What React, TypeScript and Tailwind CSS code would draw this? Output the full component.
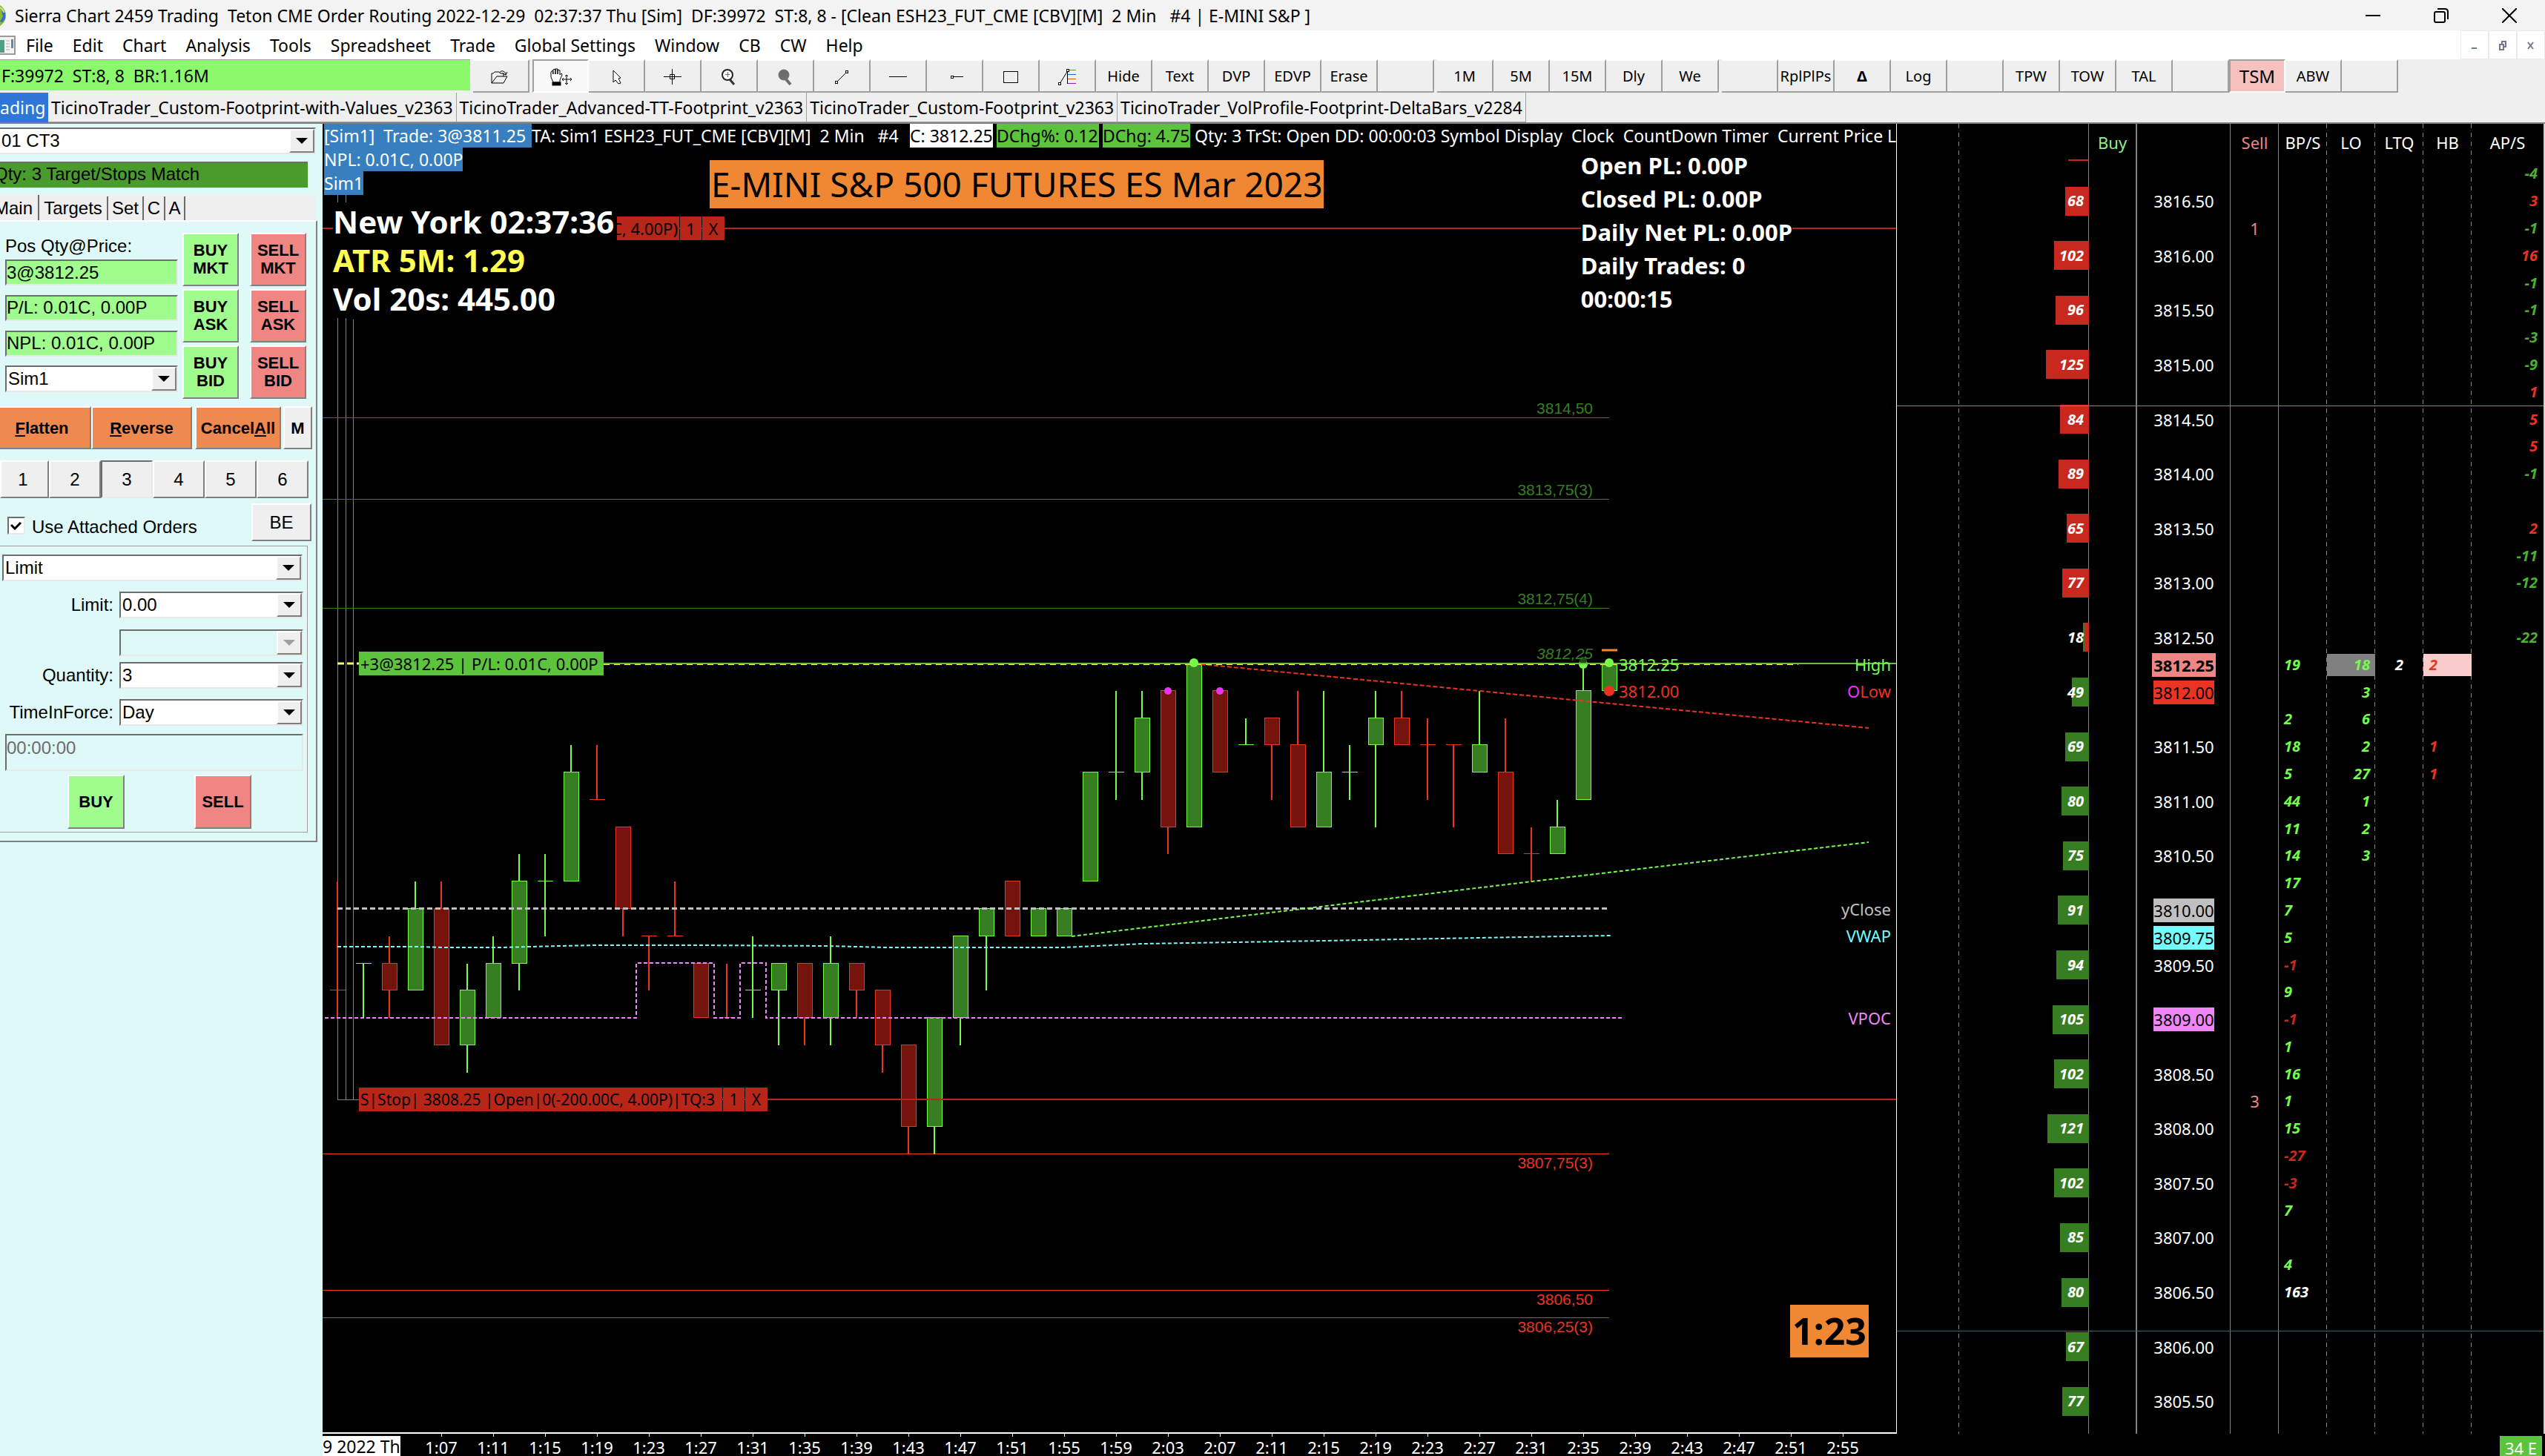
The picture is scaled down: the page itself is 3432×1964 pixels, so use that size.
import { useState } from "react";
import type { ReactNode } from "react";
import clsx from "clsx";

const RAISED =
  "border-2 border-t-white border-l-white border-r-[#808080] border-b-[#808080]";
const SUNKEN =
  "border-2 border-t-[#6d6d6d] border-l-[#6d6d6d] border-r-[#e9e9e9] border-b-[#e9e9e9]";

/* ---------- window chrome ---------- */

function TitleBar() {
  return (
    <header className="flex h-[41px] shrink-0 items-center justify-between bg-[#f3f3f3] pr-[2px]">
      <div className="flex items-center gap-3">
        <svg width="8" height="32" viewBox="0 0 8 32">
          <circle cx="-8" cy="16" r="16" fill="#8cb83a" />
          <path d="M2 10 L7 12 L7 20 L3 25 L0 24 L4 17 Z" fill="#2f6fd0" />
          <path d="M0 5 Q5 8 5 12" stroke="#c9e28a" strokeWidth="2" fill="none" />
        </svg>
        <h1 className="whitespace-pre text-[23px] leading-7">
          {"Sierra Chart 2459 Trading  Teton CME Order Routing 2022-12-29  02:37:37 Thu [Sim]  DF:39972  ST:8, 8 - [Clean ESH23_FUT_CME [CBV][M]  2 Min   #4 | E-MINI S&P ]"}
        </h1>
      </div>
      <div className="flex">
        <button aria-label="Minimize" className="flex h-9 w-[92px] items-center justify-center">
          <svg width="20" height="20"><path d="M0 10H20" stroke="#000" strokeWidth="2" /></svg>
        </button>
        <button aria-label="Restore" className="flex h-9 w-[92px] items-center justify-center">
          <svg width="20" height="20" fill="none" stroke="#000" strokeWidth="2">
            <rect x="1" y="5" width="14" height="14" rx="2" />
            <path d="M5 1H15Q19 1 19 5V15" />
          </svg>
        </button>
        <button aria-label="Close" className="flex h-9 w-[92px] items-center justify-center">
          <svg width="20" height="20" stroke="#000" strokeWidth="2"><path d="M0 0L20 20M20 0L0 20" /></svg>
        </button>
      </div>
    </header>
  );
}

const MENU = ["File", "Edit", "Chart", "Analysis", "Tools", "Spreadsheet", "Trade", "Global Settings", "Window", "CB", "CW", "Help"];

function MenuBar() {
  return (
    <nav className="flex h-[39px] shrink-0 items-center bg-white">
      <svg width="22" height="26" viewBox="0 0 22 26">
        <rect x="-4" y="1" width="24" height="24" fill="#f4f4f4" stroke="#9a9a9a" strokeWidth="2" />
        <rect x="0" y="6" width="6" height="17" fill="#4f9f8a" />
        <path d="M8 7H13M8 11H13M8 15H13M8 19H13" stroke="#b0b0b0" />
        <rect x="15" y="5" width="3" height="12" fill="#5b8fa8" />
      </svg>
      {MENU.map((item) => (
        <button key={item} className="px-[13px] text-[23px] leading-7">
          {item}
        </button>
      ))}
      <div className="ml-auto flex h-full">
        {[
          { label: "Minimize chart", d: "M4 12H11" },
          { label: "Restore chart", d: "M4 7H9V14H4ZM7 7V3H12V10H9" },
          { label: "Close chart", d: "M4 4L11 13M11 4L4 13" },
        ].map((b) => (
          <button key={b.label} aria-label={b.label} className="flex w-[38px] items-center justify-center border border-[#ebebeb]">
            <svg width="16" height="16"><path d={b.d} fill="none" stroke="#6d7b8c" strokeWidth="2" /></svg>
          </button>
        ))}
      </div>
    </nav>
  );
}

const ICONS: Record<string, ReactNode> = {
  open: (
    <g fill="none" stroke="#000">
      <path d="M26 31V18H28L30 16H36L38 18H42V22M26 31L33 22H47L42 31H26" />
      <path d="M36 17Q41 12 45 18V20M41 18L45 20L47 16" />
    </g>
  ),
  hand: (
    <g stroke="#000">
      <path d="M28 30L25 23V16L27 14L28 19V13L31 12V19V12L34 12V19V13L37 14V20L39 18L40 20L37 27V30Z" fill="#fff" />
      <rect x="27" y="30" width="11" height="4" fill="#000" />
      <path d="M46 20V33M40 26H53M44 22L46 20L48 22M44 31L46 33L48 31M42 24L40 26L42 28M51 24L53 26L51 28" fill="none" />
    </g>
  ),
  cursor: <path d="M34 14V30L37 27L41 32L44 31L41 25L44 24Z" fill="#fff" stroke="#000" />,
  cross: <path d="M26 22.5H50M37.5 12V33M34.5 19.5H40.5V25.5H34.5Z" fill="none" stroke="#000" />,
  zoom: (
    <g>
      <circle cx="36" cy="20" r="7" fill="#fff" stroke="#222" strokeWidth="2" />
      <path d="M33 19.5H39M36.5 16V23" stroke="#2f9a2f" />
      <path d="M39 26L45 33" stroke="#333" strokeWidth="3" />
    </g>
  ),
  zoomOff: (
    <g fill="#6d6d6d" stroke="#6d6d6d">
      <circle cx="36" cy="20" r="7" />
      <path d="M39 26L45 33" strokeWidth="4" />
    </g>
  ),
  line: (
    <g fill="#fff" stroke="#000">
      <path d="M31 30L45 16" />
      <rect x="29.5" y="28.5" width="3" height="3" />
      <rect x="43.5" y="14.5" width="3" height="3" />
    </g>
  ),
  hline: <path d="M26 22.5H50" stroke="#000" />,
  ray: (
    <g fill="#fff" stroke="#000">
      <path d="M35 22.5H50" />
      <rect x="33.5" y="21.5" width="3" height="3" />
    </g>
  ),
  rect: <rect x="28.5" y="15.5" width="19" height="15" fill="none" stroke="#000" />,
  fib: (
    <g fill="#fff" stroke="#000">
      <path d="M28 32L38.5 15V32" fill="none" />
      <path d="M40 13.5H50" stroke="#4f9f2f" />
      <path d="M39 19.5H50" stroke="#2f5fd0" />
      <path d="M39 25.5H50" stroke="#e0561f" />
      <path d="M39 31.5H50" stroke="#9020b0" />
      <rect x="26.5" y="30.5" width="3" height="3" />
      <rect x="37.5" y="12.5" width="3" height="3" />
    </g>
  ),
};

const TOOL_GROUPS: string[][] = [
  ["open"],
  ["hand", "cursor", "cross", "zoom", "zoomOff", "line", "hline", "ray", "rect", "fib", "Hide", "Text", "DVP", "EDVP", "Erase", ""],
  ["1M", "5M", "15M", "Dly", "We"],
  ["", "RplPlPs", "Δ", "Log", "", "TPW", "TOW", "TAL", "", "TSM", "ABW", ""],
];

function ToolButton({ id }: { id: string }) {
  const pressed = id === "hand" || id === "TSM";
  return (
    <button
      aria-label={id || "Empty"}
      aria-pressed={pressed}
      className={clsx(
        "flex h-full w-[76px] items-center justify-center overflow-hidden border-2 text-[20px] leading-6",
        pressed
          ? "border-t-[#a0a0a0] border-l-[#a0a0a0] border-r-white border-b-white"
          : "border-l-0 border-t-white border-r-[#a0a0a0] border-b-[#a0a0a0] bg-[#efefef]",
        id === "hand" && "bg-[#f8f8f8]",
        id === "TSM" && "bg-[#f6c1bf] text-[24px]",
        id === "Δ" && "font-bold"
      )}
    >
      {ICONS[id] ? (
        <svg width="76" height="44" viewBox="0 0 76 44" className="shrink-0">
          {ICONS[id]}
        </svg>
      ) : (
        id
      )}
    </button>
  );
}

function Toolbar() {
  return (
    <div className="flex h-[45px] shrink-0 gap-1 bg-[#efefef]">
      <div className="h-[42px] w-[634px] border-t border-[#a0a0a0] bg-[#8afa6c] px-[2px] text-[23px] leading-[42px] whitespace-pre">
        {"F:39972  ST:8, 8  BR:1.16M"}
      </div>
      {TOOL_GROUPS.map((group, g) => (
        <div key={g} className="flex">
          {group.map((id, i) => (
            <ToolButton key={i} id={id} />
          ))}
        </div>
      ))}
    </div>
  );
}

const CHARTBOOKS = [
  "TicinoTrader_Custom-Footprint-with-Values_v2363",
  "TicinoTrader_Advanced-TT-Footprint_v2363",
  "TicinoTrader_Custom-Footprint_v2363",
  "TicinoTrader_VolProfile-Footprint-DeltaBars_v2284",
];

function BookTabs() {
  return (
    <div className="flex h-[42px] shrink-0 border-b-2 border-[#808080] bg-[#efefef] text-[23px] leading-[40px]">
      <button className="w-[65px] bg-[#2f76d6] pr-[5px] text-right text-white">ading</button>
      {CHARTBOOKS.map((name) => (
        <button key={name} className="border-r border-b border-[#a0a0a0] px-1 whitespace-nowrap">
          {name}
        </button>
      ))}
    </div>
  );
}

/* ---------- trade window ---------- */

function Combo({ label, options, className, disabled }: { label: string; options: string[]; className?: string; disabled?: boolean }) {
  return (
    <div className={clsx("flex h-9", SUNKEN, disabled ? "bg-[#dff9f9]" : "bg-white", className)}>
      <select aria-label={label} disabled={disabled} className="min-w-0 flex-1 appearance-none bg-transparent px-[2px] leading-7 outline-none">
        {options.map((o) => (
          <option key={o}>{o}</option>
        ))}
      </select>
      <span className={clsx("pointer-events-none flex w-[34px] items-center justify-center bg-[#efefef]", RAISED)}>
        <svg width="16" height="8"><path d="M0 0H16L8 8Z" fill={disabled ? "#a0a0a0" : "#000"} /></svg>
      </span>
    </div>
  );
}

function Push({ children, className }: { children: ReactNode; className?: string }) {
  return <button className={clsx("flex items-center justify-center text-center", RAISED, className)}>{children}</button>;
}

const GREEN = "bg-[#a0fc8c] text-[22px] font-bold leading-6";
const PINK = "bg-[#ef8683] text-[22px] font-bold leading-6";
const ORANGE = "bg-[#ee8950] text-[22px] font-bold";

function Readout({ label, value }: { label: string; value: string }) {
  return <input aria-label={label} readOnly defaultValue={value} className={clsx("h-[35px] w-full bg-[#a0fc8c] outline-none", SUNKEN)} />;
}

function TradeWindow() {
  const [qty, setQty] = useState(3);
  return (
    <aside className="w-[435px] shrink-0 overflow-hidden bg-[#dff9f9] pt-[5px] font-['Liberation_Sans',Arial,sans-serif] text-[24px]">
      <Combo label="Trade window" options={["01 CT3"]} className="w-[426px] border-l-0" />
      <div className="mt-[10px] h-[35px] w-[415px] border-t-2 border-[#6d6d6d] bg-[#499c2c] leading-[30px]">
        <span className="-ml-2">Qty: 3 Target/Stops Match</span>
      </div>
      <div role="tablist" className="mt-[10px] flex h-[34px] w-[426px] items-end bg-[#efefef]">
        <button role="tab" aria-selected className="h-[34px] w-[53px] border-r-2 border-[#6d6d6d] text-left">
          <span className="-ml-2">Main</span>
        </button>
        {[
          ["Targets", "w-[93px]"],
          ["Set", "w-[48px]"],
          ["C", "w-[29px]"],
          ["A", "w-[27px]"],
        ].map(([t, w]) => (
          <button key={t} role="tab" className={clsx("h-[32px] border-r-2 border-[#6d6d6d] leading-8", w)}>
            {t}
          </button>
        ))}
      </div>

      <div className="h-[839px] w-[428px] border-t-2 border-r-2 border-b-2 border-t-white border-r-[#808080] border-b-[#808080] pt-[15px]">
        <div className="flex">
          <div className="ml-[7px] flex w-[233px] flex-col">
            <div className="h-9 leading-9">Pos Qty@Price:</div>
            <Readout label="Position" value="3@3812.25" />
            <div className="mt-3"><Readout label="Profit/Loss" value="P/L: 0.01C, 0.00P" /></div>
            <div className="mt-3"><Readout label="Net profit/loss" value="NPL: 0.01C, 0.00P" /></div>
            <Combo label="Account" options={["Sim1"]} className="mt-3" />
          </div>
          <div className="ml-[6px] grid w-[76px] auto-rows-[72px] gap-1">
            <Push className={GREEN}>BUY<br />MKT</Push>
            <Push className={GREEN}>BUY<br />ASK</Push>
            <Push className={GREEN}>BUY<br />BID</Push>
          </div>
          <div className="ml-[15px] grid w-[76px] auto-rows-[72px] gap-1">
            <Push className={PINK}>SELL<br />MKT</Push>
            <Push className={PINK}>SELL<br />ASK</Push>
            <Push className={PINK}>SELL<br />BID</Push>
          </div>
        </div>

        <div className="mt-[10px] flex h-[58px]">
          <Push className={clsx(ORANGE, "w-[123px] border-l-0 pr-2")}><u>F</u>latten</Push>
          <Push className={clsx(ORANGE, "w-[136px]")}><u>R</u>everse</Push>
          <Push className={clsx(ORANGE, "ml-1 w-[116px]")}>Cancel<u>A</u>ll</Push>
          <Push className="ml-[3px] w-[39px] bg-[#efefef] text-[22px] font-bold">M</Push>
        </div>

        <div className="mt-[15px] flex h-[51px]">
          {[1, 2, 3, 4, 5, 6].map((n) => (
            <button
              key={n}
              onClick={() => setQty(n)}
              className={clsx("bg-[#efefef]", n === 1 ? "w-[66px] pr-1" : "w-[70px]", n === qty ? SUNKEN : RAISED)}
            >
              {n}
            </button>
          ))}
        </div>

        <div className="mt-[7px] flex h-[51px] items-center">
          <input
            id="attached"
            type="checkbox"
            defaultChecked
            className={clsx("peer ml-[10px] mt-2 h-6 w-6 appearance-none bg-white", SUNKEN)}
          />
          <svg width="16" height="12" className="pointer-events-none -ml-5 mt-2 hidden peer-checked:block">
            <path d="M1 5L6 10L14 2" fill="none" stroke="#000" strokeWidth="3" />
          </svg>
          <label htmlFor="attached" className="ml-[13px] mt-3">Use Attached Orders</label>
          <Push className="ml-auto mr-[6px] h-[51px] w-[81px] bg-[#efefef]">BE</Push>
        </div>

        <div className="mt-[6px] h-[387px] w-[415px] border border-l-0 border-[#a0a0a0] pt-[11px]">
          <Combo label="Order type" options={["Limit"]} className="ml-[3px] w-[405px]" />
          <div className="mt-[14px] flex items-center justify-end pr-[5px]">
            <span className="mr-2">Limit:</span>
            <Combo label="Limit" options={["0.00"]} className="w-[248px]" />
          </div>
          <div className="mt-[15px] flex justify-end pr-[5px]">
            <Combo label="Second price" options={[""]} disabled className="w-[248px]" />
          </div>
          <div className="mt-2 flex items-center justify-end pr-[5px]">
            <span className="mr-2">Quantity:</span>
            <Combo label="Quantity" options={["3"]} className="w-[248px]" />
          </div>
          <div className="mt-[14px] flex items-center justify-end pr-[5px]">
            <span className="mr-2">TimeInForce:</span>
            <Combo label="TimeInForce" options={["Day"]} className="w-[248px]" />
          </div>
          <input aria-label="Expiry" disabled defaultValue="00:00:00" className={clsx("mt-[11px] ml-[7px] block h-[50px] w-[402px] pb-3 text-[#6d6d6d]", SUNKEN)} />
          <div className="mt-[5px] flex">
            <Push className={clsx(GREEN, "ml-[91px] h-[73px] w-[77px]")}>BUY</Push>
            <Push className={clsx(PINK, "ml-[94px] h-[73px] w-[77px]")}>SELL</Push>
          </div>
        </div>
      </div>
    </aside>
  );
}

/* ---------- chart ---------- */

// u/d, body top, body bottom, high, low: quarter points below 3812.25
type Bar = ["u" | "d", number, number, number, number];

const BARS: Bar[] = [
  ["d", 12, 12, 8, 13], ["u", 11, 11, 11, 13], ["d", 11, 12, 10, 13], ["u", 9, 12, 8, 12],
  ["d", 9, 14, 8, 14], ["u", 12, 14, 11, 15], ["u", 11, 13, 10, 13], ["u", 8, 11, 7, 12],
  ["u", 8, 8, 7, 10], ["u", 4, 8, 3, 8], ["d", 5, 5, 3, 5], ["d", 6, 9, 6, 10],
  ["d", 10, 10, 10, 12], ["d", 10, 10, 8, 10], ["d", 11, 13, 11, 13], ["d", 13, 13, 11, 13],
  ["u", 12, 12, 10, 13], ["u", 11, 12, 11, 14], ["d", 11, 13, 11, 14], ["u", 11, 13, 10, 14],
  ["d", 11, 12, 11, 13], ["d", 12, 14, 12, 15], ["d", 14, 17, 14, 18], ["u", 13, 17, 13, 18],
  ["u", 10, 13, 10, 14], ["u", 9, 10, 9, 12], ["d", 8, 10, 8, 10], ["u", 9, 10, 9, 10],
  ["u", 9, 10, 9, 10], ["u", 4, 8, 4, 8], ["u", 4, 4, 1, 5], ["u", 2, 4, 1, 5],
  ["d", 1, 6, 1, 7], ["u", 0, 6, 0, 6], ["d", 1, 4, 1, 4], ["u", 3, 3, 2, 3],
  ["d", 2, 3, 2, 5], ["d", 3, 6, 1, 6], ["u", 4, 6, 1, 6], ["u", 4, 4, 3, 5],
  ["u", 2, 3, 1, 6], ["d", 2, 3, 1, 3], ["d", 3, 3, 2, 5], ["d", 3, 3, 3, 6],
  ["u", 3, 4, 1, 4], ["d", 4, 7, 2, 7], ["d", 7, 7, 6, 8], ["u", 6, 7, 5, 7],
  ["u", 1, 5, 0, 5], ["u", 0, 1, 0, 1],
];

const barX = (i: number) => 20 + 35 * i;
const tickY = (t: number) => Math.round(728 + 36.775 * t);

const PIVOTS = [
  { t: -9, text: "3814,50", up: true },
  { t: -6, text: "3813,75(3)", up: true },
  { t: -2, text: "3812,75(4)", up: true },
  { t: 18, text: "3807,75(3)", up: false },
  { t: 23, text: "3806,50", up: false },
  { t: 24, text: "3806,25(3)", up: false },
];

function Candles() {
  return (
    <svg className="h-full w-full" aria-label="ESH23 2 minute chart">
      <path d="M20.5 96V1316M31.5 96V1316M41.5 264V1316M20 1316.5H49" fill="none" stroke="#808080" />
      {PIVOTS.map((p) => (
        <g key={p.text}>
          <path d={`M0 ${tickY(p.t) - 0.5}H1735`} stroke={p.up ? "#377e22" : "#ea3323"} />
          <text
            x="1713"
            y={tickY(p.t) + (p.up ? -6 : 19)}
            textAnchor="end"
            fill={p.up ? "#377e22" : "#ea3323"}
            className="font-['Liberation_Sans',Arial,sans-serif] text-[21px]"
          >
            {p.text}
          </text>
        </g>
      ))}
      {BARS.map(([dir, top, bottom, high, low], i) => {
        const x = barX(i);
        const line = dir === "u" ? "#75fb4c" : "#ea3323";
        return (
          <g key={i} stroke={line} strokeWidth="2">
            <path d={`M${x} ${tickY(high)}V${tickY(low)}`} />
            {top === bottom ? (
              <path d={`M${x - 10} ${tickY(top) - 0.5}H${x + 11}`} strokeWidth="1" />
            ) : (
              <rect x={x - 9.5} y={tickY(top) - 0.5} width="20" height={tickY(bottom) - tickY(top)} strokeWidth="1" fill={dir === "u" ? "#377e22" : "#75140c"} />
            )}
          </g>
        );
      })}
      <path d="M20 1058.5H1735" stroke="#c0c0c0" strokeWidth="3" strokeDasharray="7 4" />
      <path d="M20 1110L125 1110L165 1111L240 1111L320 1109L370 1108H510L680 1109L760 1111H1000L1107 1106L1350 1102L1560 1098L1737 1095" fill="none" stroke="#75fbfd" strokeWidth="2" strokeDasharray="5 3" />
      <path d="M3 1206H423V1132H528V1206H563V1132H598V1206H1754" fill="none" stroke="#ee86f7" strokeWidth="2" strokeDasharray="5 3" />
      <path d="M1175 728L1737 782L2085 815" fill="none" stroke="#ea3323" strokeWidth="2" strokeDasharray="6 3" />
      <path d="M1010 1096L1631 1022L2085 969" fill="none" stroke="#75fb4c" strokeWidth="2" strokeDasharray="5 3" />
      <path d="M0 141H2123M49 1316H2123" stroke="#b82619" strokeWidth="2" />
      <path d="M20 728H49" stroke="#ffff54" strokeWidth="3" strokeDasharray="9 4" />
      <path d="M379 728H2123" stroke="#5cc43c" strokeWidth="2" />
      <path d="M379 729.5H1990" stroke="#ffff54" strokeDasharray="8 6" />
      <g fill="#75fb4c">
        <circle cx="1175" cy="727" r="6" />
        <circle cx="1700" cy="729" r="6" />
        <circle cx="1700" cy="724" r="5" fill="#1f4a14" />
        <path d="M1690 728H1710" stroke="#5cc43c" strokeWidth="2" />
        <circle cx="1735" cy="727" r="6" />
      </g>
      <circle cx={barX(32)} cy={tickY(1)} r="5" fill="#ea33f7" />
      <circle cx={barX(34)} cy={tickY(1)} r="5" fill="#ea33f7" />
      <circle cx="1735" cy={tickY(1)} r="7" fill="#ea3323" />
      <path d="M1725 710H1746" stroke="#ef8733" strokeWidth="3" />
      <text x="1713" y="722" textAnchor="end" fill="#377e22" className="font-['Liberation_Sans',Arial,sans-serif] text-[21px] italic">3812,25</text>
      <g className="text-[22px]">
        <text x="1748" y="738" fill="#75fb4c">3812.25</text>
        <text x="1748" y="774" fill="#ea3323">3812.00</text>
        <g textAnchor="end">
          <text x="2115" y="738" fill="#75fb4c">High</text>
          <text x="2115" y="774" fill="#ea3323"><tspan fill="#ea33f7">O</tspan>Low</text>
          <text x="2115" y="1068" fill="#c0c0c0">yClose</text>
          <text x="2115" y="1104" fill="#75fbfd">VWAP</text>
          <text x="2115" y="1215" fill="#ee86f7">VPOC</text>
        </g>
      </g>
    </svg>
  );
}

const TIMES = Array.from({ length: 28 }, (_, i) => {
  const m = 67 + i * 4;
  return `${Math.floor(m / 60)}:${String(m % 60).padStart(2, "0")}`;
});

function Chart() {
  return (
    <section className="flex min-w-0 flex-1 flex-col bg-black text-white">
      <div className="relative min-h-0 flex-1 overflow-hidden border-r border-b-2 border-white">
        <Candles />

        <div className="absolute top-0 left-[2px] text-[23px] leading-8 whitespace-pre">
          <div className="flex">
            <span className="w-[280px] shrink-0 bg-[#387fbf]">{"[Sim1]  Trade: 3@3811.25"}</span>
            <span className="w-[510px] shrink-0">{"TA: Sim1 ESH23_FUT_CME [CBV][M]  2 Min   #4"}</span>
            <span className="w-[112px] shrink-0 bg-white text-black">C: 3812.25</span>
            <span className="ml-[5px] w-[138px] shrink-0 bg-[#5cc43c] text-black">DChg%: 0.12</span>
            <span className="ml-[5px] w-[118px] shrink-0 bg-[#5cc43c] text-black">DChg: 4.75</span>
            <span className="ml-[6px]">{"Qty: 3 TrSt: Open DD: 00:00:03 Symbol Display  Clock  CountDown Timer  Current Price L"}</span>
          </div>
          <div className="w-fit bg-[#387fbf]">NPL: 0.01C, 0.00P</div>
          <div className="w-fit bg-[#387fbf]">Sim1</div>
        </div>

        <div className="absolute top-[49px] left-[522px] h-[65px] bg-[#ef8733] px-[2px] text-[46px] leading-[65px] whitespace-nowrap text-black">
          E-MINI S&amp;P 500 FUTURES ES Mar 2023
        </div>

        <div className="absolute top-[125px] left-[397px] flex h-8 gap-px text-[22px] leading-8 whitespace-nowrap text-black">
          <span className="flex w-[84px] justify-end overflow-hidden bg-[#b82619] pr-[2px]">C, 4.00P)</span>
          <span className="w-[29px] bg-[#b82619] text-center">1</span>
          <span className="w-[30px] bg-[#b82619] text-center">X</span>
        </div>
        <div className="absolute top-[106px] left-[14px] w-[383px] bg-black text-[42px] leading-[52px] font-bold whitespace-nowrap">
          <div>New York 02:37:36</div>
          <div className="text-[#ffff54]">ATR 5M: 1.29</div>
          <div>Vol 20s: 445.00</div>
        </div>

        <div className="absolute top-[34px] right-[140px] bg-black text-[31px] leading-[45px] font-bold whitespace-nowrap">
          <div>Open PL: 0.00P</div>
          <div>Closed PL: 0.00P</div>
          <div>Daily Net PL: 0.00P</div>
          <div>Daily Trades: 0</div>
          <div>00:00:15</div>
        </div>

        <div className="absolute top-[712px] left-[49px] h-8 min-w-[330px] bg-[#5cc43c] px-[2px] text-[22px] leading-8 whitespace-nowrap text-black">
          +3@3812.25 | P/L: 0.01C, 0.00P
        </div>
        <div className="absolute top-[1300px] left-[49px] flex h-8 gap-px text-[21px] leading-8 whitespace-nowrap text-black">
          <span className="w-[490px] bg-[#b82619] px-[2px]">S|Stop| 3808.25 |Open|0(-200.00C, 4.00P)|TQ:3</span>
          <span className="w-[29px] bg-[#b82619] text-center">1</span>
          <span className="w-[30px] bg-[#b82619] text-center">X</span>
        </div>

        <div className="absolute right-[37px] bottom-[101px] h-[71px] w-[106px] bg-[#ef8733] text-center text-[50px] leading-[71px] font-bold text-black">
          1:23
        </div>
      </div>

      <div className="flex h-[30px] shrink-0 overflow-hidden text-[22px] leading-7">
        <div className="mt-[3px] w-[105px] shrink-0 bg-white pr-[2px] text-right text-[23px] whitespace-nowrap text-black">9 2022 Th</div>
        <div className="ml-5 flex">
          {TIMES.map((t) => (
            <div key={t} className="flex w-[70px] shrink-0 flex-col items-center">
              <span className="h-1 w-px shrink-0 bg-white" />
              {t}
            </div>
          ))}
        </div>
      </div>
    </section>
  );
}

/* ---------- DOM ladder ---------- */

const VOLUME: Record<string, number> = {
  "3816.50": 68, "3816.00": 102, "3815.50": 96, "3815.00": 125, "3814.50": 84, "3814.00": 89,
  "3813.50": 65, "3813.00": 77, "3812.50": 18, "3812.00": 49, "3811.50": 69, "3811.00": 80,
  "3810.50": 75, "3810.00": 91, "3809.50": 94, "3809.00": 105, "3808.50": 102, "3808.00": 121,
  "3807.50": 102, "3807.00": 85, "3806.50": 80, "3806.00": 67, "3805.50": 77,
};

const ASK_PULL: Record<string, number> = {
  "3816.75": -4, "3816.50": 3, "3816.25": -1, "3816.00": 16, "3815.75": -1, "3815.50": -1,
  "3815.25": -3, "3815.00": -9, "3814.75": 1, "3814.50": 5, "3814.25": 5, "3814.00": -1,
  "3813.50": 2, "3813.25": -11, "3813.00": -12, "3812.50": -22,
};

const BID_PULL: Record<string, number> = {
  "3812.25": 19, "3811.75": 2, "3811.50": 18, "3811.25": 5, "3811.00": 44, "3810.75": 11,
  "3810.50": 14, "3810.25": 17, "3810.00": 7, "3809.75": 5, "3809.50": -1, "3809.25": 9,
  "3809.00": -1, "3808.75": 1, "3808.50": 16, "3808.25": 1, "3808.00": 15, "3807.75": -27,
  "3807.50": -3, "3807.25": 7, "3806.75": 4, "3806.50": 163,
};

const LIFTED: Record<string, number> = {
  "3812.25": 18, "3812.00": 3, "3811.75": 6, "3811.50": 2, "3811.25": 27, "3811.00": 1, "3810.75": 2, "3810.50": 3,
};

const HIT: Record<string, number> = { "3812.25": 2, "3811.50": 1, "3811.25": 1 };
const STOPS: Record<string, number> = { "3816.25": 1, "3808.25": 3 };

const PRICE_STYLE: Record<string, string> = {
  "3812.25": "bg-[#ef8683] text-black font-bold px-[2px]",
  "3812.00": "bg-[#ea3323] text-black",
  "3810.00": "bg-[#c0c0c0] text-black",
  "3809.75": "bg-[#75fbfd] text-black",
  "3809.00": "bg-[#ee86f7] text-black",
};

const PRICES = Array.from({ length: 46 }, (_, i) => (3816.75 - i * 0.25).toFixed(2));
const isShown = (p: string) => p.endsWith(".50") || p.endsWith(".00") || p in PRICE_STYLE;

const DASH = "bg-[repeating-linear-gradient(to_bottom,#808080_0px,#808080_6px,transparent_6px,transparent_12px)]";

function VolumeBar({ price, volume }: { price: string; volume: number }) {
  const above = Number(price) > 3812.25;
  return (
    <div className="relative -my-1 flex h-[39px] items-center justify-end">
      <div
        className={clsx("absolute inset-y-0 right-0", above ? "bg-[#c8281d]" : "bg-[#377e22]", volume === 18 && "border-l-2 border-[#377e22]")}
        style={{ width: Math.round(volume * 0.464) }}
      />
      <span className="relative pr-[7px] text-white">{volume}</span>
    </div>
  );
}

function Ladder() {
  return (
    <section className="flex w-[874px] shrink-0 flex-col bg-black text-white">
      <div className="relative min-h-0 flex-1 border-r-2 border-[#d0d0d0]">
        <div aria-hidden className="absolute inset-0 flex">
          <div className="flex w-[84px] justify-end"><i className={clsx("w-px", DASH)} /></div>
          <div className="w-[175px] border-r border-[#808080]" />
          <div className="w-[65px] border-r-2 border-[#808080]" />
          <div className="w-[126px] border-r border-[#808080]" />
          <div className="w-[65px] border-r border-[#808080]" />
          {[0, 1, 2, 3].map((i) => (
            <div key={i} className="flex w-[65px] justify-end"><i className={clsx("w-px", DASH)} /></div>
          ))}
        </div>
        <div aria-hidden className="absolute top-[48px] left-[231px] h-[2px] w-7 bg-[#c8281d]" />

        <table className="relative h-full w-full table-fixed border-collapse text-[20px] leading-6 font-bold italic">
          <colgroup>
            <col className="w-[84px]" />
            <col className="w-[175px]" />
            <col className="w-[65px]" />
            <col className="w-[126px]" />
            <col className="w-[65px]" />
            <col className="w-[65px]" />
            <col className="w-[65px]" />
            <col className="w-[65px]" />
            <col className="w-[65px]" />
            <col />
          </colgroup>
          <thead>
            <tr className="h-[49px] text-[22px] font-normal not-italic">
              <th />
              <th />
              <th className="pl-3 text-left font-normal text-[#8df08a]">Buy</th>
              <th />
              <th className="p-0 font-normal text-[#ef8683]">Sell</th>
              <th className="p-0 font-normal">BP/S</th>
              <th className="p-0 font-normal">LO</th>
              <th className="p-0 font-normal">LTQ</th>
              <th className="p-0 font-normal">HB</th>
              <th className="p-0 font-normal">AP/S</th>
            </tr>
          </thead>
          <tbody>
            {PRICES.map((p) => (
              <tr key={p} className="h-9">
                <td className="p-0" />
                <td className="p-0">{p in VOLUME && <VolumeBar price={p} volume={VOLUME[p]} />}</td>
                <td className="p-0" />
                <td className="p-0 text-[22px] font-normal not-italic">
                  {isShown(p) && (
                    <div className="flex h-8 justify-center">
                      <span className={clsx("leading-8", PRICE_STYLE[p])}>{p}</span>
                    </div>
                  )}
                </td>
                <td className="p-0 text-center text-[22px] font-normal text-[#ef8683] not-italic">{STOPS[p]}</td>
                <td
                  className={clsx(
                    "p-0 pl-[7px]",
                    BID_PULL[p] < 0 ? "text-[#c8281d]" : BID_PULL[p] === 163 ? "text-white" : "text-[#75fb4c]"
                  )}
                >
                  {BID_PULL[p]}
                </td>
                <td className="p-0 text-right text-[#75fb4c]">
                  {p in LIFTED && <div className={clsx("pr-[7px] leading-[30px]", p === "3812.25" && "bg-[#808080]")}>{LIFTED[p]}</div>}
                </td>
                <td className="p-0 text-center">{p === "3812.25" && 2}</td>
                <td className="p-0 text-[#ea3323]">
                  {p in HIT && <div className={clsx("pl-[8px] leading-[30px]", p === "3812.25" && "bg-[#f8cccb]")}>{HIT[p]}</div>}
                </td>
                <td className={clsx("p-0 pr-[8px] text-right", ASK_PULL[p] < 0 ? "text-[#4faf32]" : "text-[#ea3323]")}>{ASK_PULL[p]}</td>
              </tr>
            ))}
          </tbody>
          <tfoot>
            <tr className="h-[25px]"><td className="p-0" colSpan={10} /></tr>
          </tfoot>
        </table>
        <div aria-hidden className="absolute top-[380px] h-px w-full bg-[#4faf32]" />
        <div aria-hidden className="absolute top-[1628px] h-px w-full bg-[#c8281d]" />
      </div>
      <div className="flex h-[30px] shrink-0 items-end justify-end pr-1">
        <div className="h-[27px] bg-[#5cc43c] px-[7px] text-[22px] leading-8">34 E</div>
      </div>
    </section>
  );
}

export default function App() {
  return (
    <div className="flex h-screen flex-col overflow-hidden bg-[#efefef] font-['Noto_Sans','Open_Sans',sans-serif] text-black">
      <TitleBar />
      <MenuBar />
      <Toolbar />
      <BookTabs />
      <main className="flex min-h-0 flex-1">
        <TradeWindow />
        <Chart />
        <Ladder />
      </main>
    </div>
  );
}
